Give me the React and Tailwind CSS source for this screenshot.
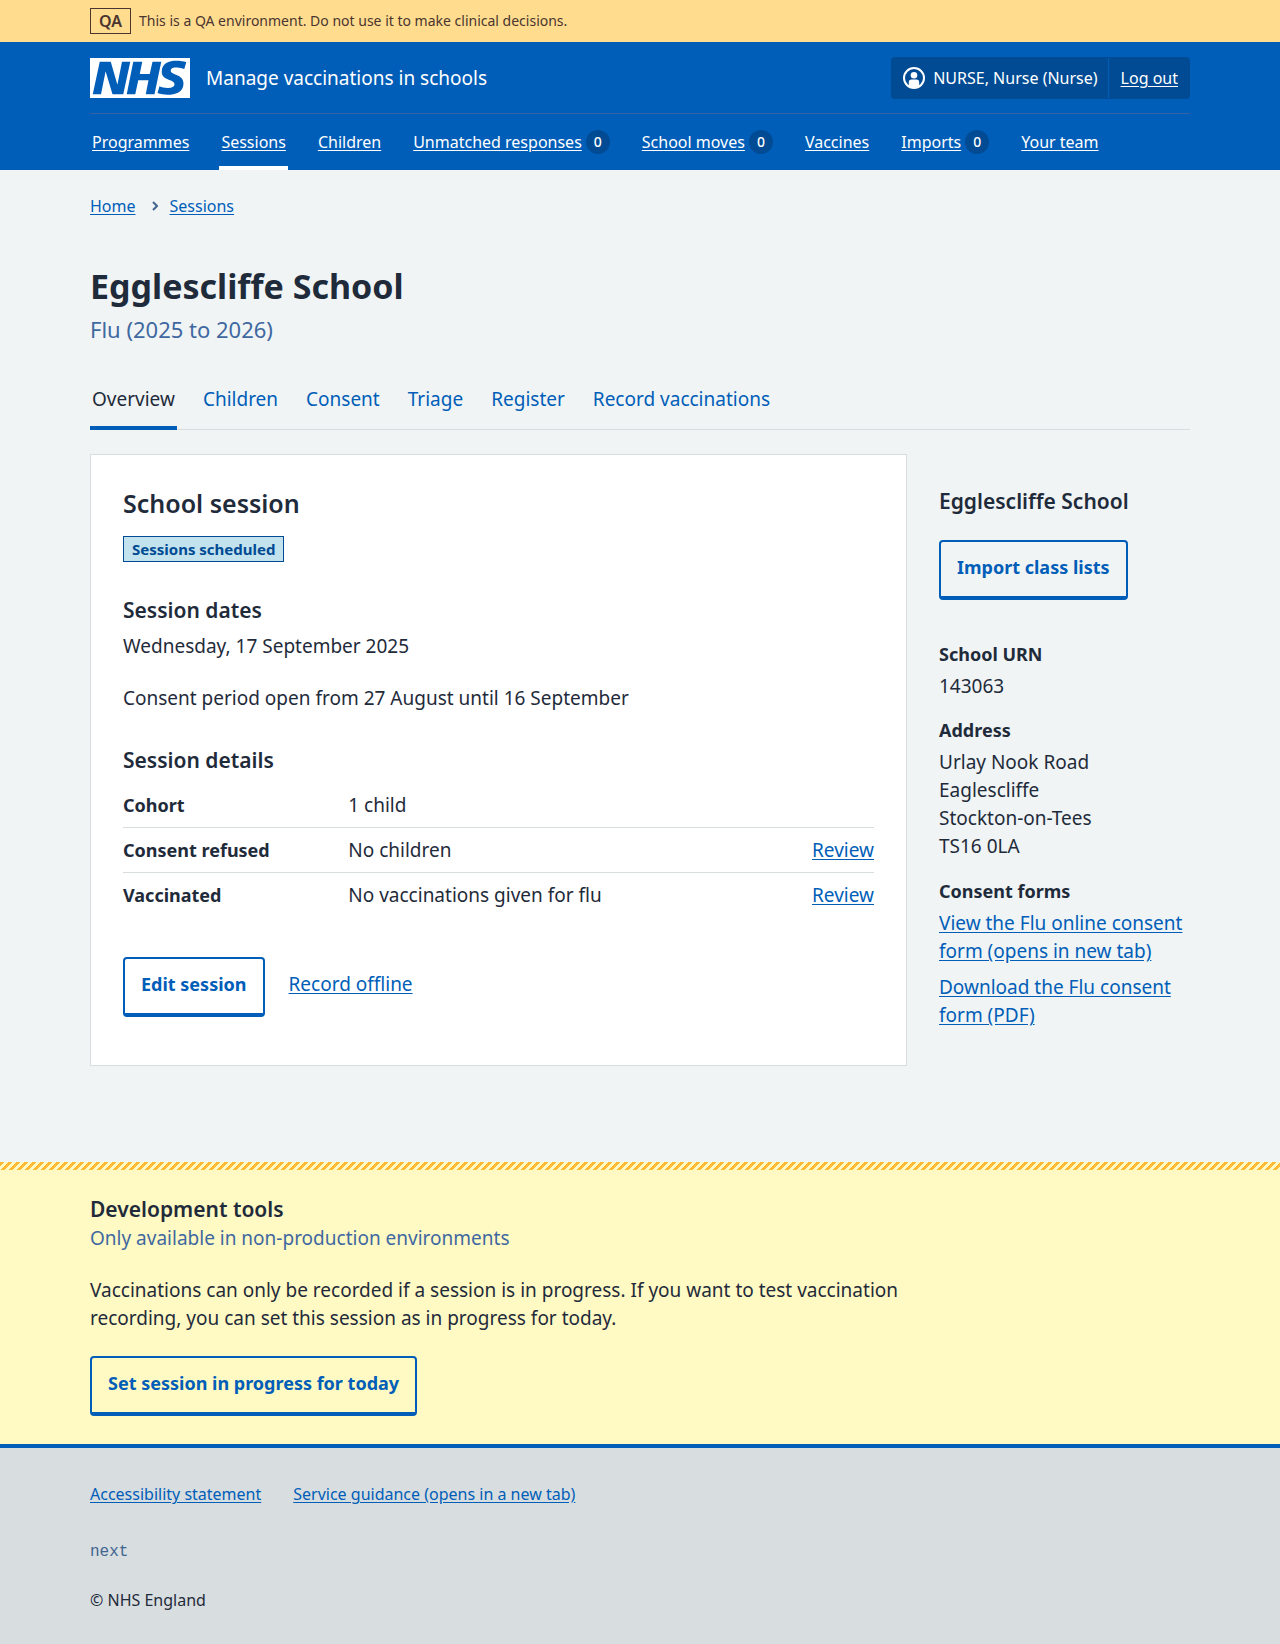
import React from "react";

const navItems = [
  { label: "Programmes" },
  { label: "Sessions", current: true },
  { label: "Children" },
  { label: "Unmatched responses", count: 0 },
  { label: "School moves", count: 0 },
  { label: "Vaccines" },
  { label: "Imports", count: 0 },
  { label: "Your team" },
];

const tabs = ["Overview", "Children", "Consent", "Triage", "Register", "Record vaccinations"];

const details = [
  { key: "Cohort", value: "1 child" },
  { key: "Consent refused", value: "No children", action: true },
  { key: "Vaccinated", value: "No vaccinations given for flu", action: true },
];

function Container({ className = "", children }) {
  return (
    <div className="px-8">
      <div className={"mx-auto max-w-[1100px] " + className}>{children}</div>
    </div>
  );
}

function Link({ children, className = "" }) {
  return (
    <a href="#" className={"text-[#005eb8] underline underline-offset-2 " + className}>
      {children}
    </a>
  );
}

function SecondaryButton({ children }) {
  return (
    <button
      type="button"
      className="rounded border-2 border-b-4 border-[#005eb8] px-4 pt-[11px] pb-[15px] text-[18px] leading-7 font-bold text-[#005eb8]"
    >
      {children}
    </button>
  );
}

function NhsLogo() {
  return (
    <svg viewBox="0 0 200 80" className="h-10 w-[100px] shrink-0" role="img" aria-label="NHS">
      <path
        fill="#fff"
        d="M200 0v80H0V0h200Zm-27.5 5.5c-14.5 0-29 5-29 22 0 10.2 7.7 13.5 14.7 16.3l.7.3c5.4 2 10.1 3.9 10.1 8.4 0 6.5-8.5 7.5-14 7.5s-12.5-1.5-16-3.5L135 70c5.5 2 13.5 3.5 20 3.5 15.5 0 32-4.5 32-22.5 0-19.5-25.5-16.5-25.5-25.5 0-5.5 5.5-6.5 12.5-6.5a35 35 0 0 1 14.5 3l4-13.5c-4.5-2-12-3-20-3Zm-131 2h-22l-14 65H22l9-45h.5l13.5 45h21.5l14-65H64l-9 45h-.5l-13-45Zm63 0h-18l-13 65h17l6-28H117l-5.5 28H129l13.5-65H125L119.5 32h-20l5-24.5Z"
      />
    </svg>
  );
}

function UserIcon() {
  return (
    <svg viewBox="0 0 22 22" className="size-[22px] shrink-0" aria-hidden="true">
      <circle cx="11" cy="11" r="10" fill="none" stroke="#fff" strokeWidth="2" />
      <circle cx="11" cy="8.3" r="3.3" fill="#fff" />
      <path
        fill="#fff"
        d="M8.6 12.6h4.8a2.8 2.8 0 0 1 2.8 2.8v3.6A10 10 0 0 1 11 21a10 10 0 0 1-5.2-2v-3.6a2.8 2.8 0 0 1 2.8-2.8Z"
      />
    </svg>
  );
}

function Header() {
  return (
    <header className="bg-[#005eb8] text-[16px] leading-6 text-white">
      <Container>
        <div className="flex items-center justify-between border-b border-[#3365a8] pt-[15px] pb-3.5">
          <a href="#" className="flex items-center gap-4 text-[19px] leading-7">
            <NhsLogo />
            <span>Manage vaccinations in schools</span>
          </a>
          <div className="flex rounded bg-[#004b93]">
            <span className="my-px flex items-center gap-2 border-r border-[#005eb8] py-2 pr-2.5 pl-3">
              <UserIcon />
              NURSE, Nurse (Nurse)
            </span>
            <a href="#" className="px-3 py-[9px] underline underline-offset-2">
              Log out
            </a>
          </div>
        </div>
        <nav aria-label="Menu">
          <ul className="flex gap-7">
            {navItems.map((item) => (
              <li
                key={item.label}
                className={
                  "flex items-center gap-1 border-b-4 px-0.5 pt-4 pb-3 " +
                  (item.current ? "border-white" : "border-transparent")
                }
              >
                <a href="#" className="underline underline-offset-2">
                  {item.label}
                </a>
                {item.count !== undefined && (
                  <span className="flex size-6 items-center justify-center rounded-full bg-[#004b93] text-[14px] font-medium">
                    {item.count}
                  </span>
                )}
              </li>
            ))}
          </ul>
        </nav>
      </Container>
    </header>
  );
}

function SessionCard() {
  return (
    <section className="min-w-0 flex-1 border border-[#d8dde0] bg-white p-8">
      <h2 className="text-[25px] leading-8 font-semibold">School session</h2>
      <p className="mt-[17px] flex">
        <strong className="border border-[#004b93] bg-[#c2e2ee] px-2 text-[15px] leading-6 font-bold text-[#004b93]">
          Sessions scheduled
        </strong>
      </p>
      <h3 className="mt-[33px] text-[21px] leading-[30px] font-semibold">Session dates</h3>
      <p className="mt-[7px]">Wednesday, 17 September 2025</p>
      <p className="mt-6">Consent period open from 27 August until 16 September</p>
      <h3 className="mt-[33px] text-[21px] leading-[30px] font-semibold">Session details</h3>
      <dl className="mt-2">
        {details.map((row, i) => (
          <div
            key={row.key}
            className={
              "flex py-2 " + (i < details.length - 1 ? "border-b border-[#d8dde0]" : "")
            }
          >
            <dt className="w-[30%] text-[18px] font-bold">{row.key}</dt>
            <dd className="flex-1">{row.value}</dd>
            {row.action && (
              <dd>
                <Link>Review</Link>
              </dd>
            )}
          </div>
        ))}
      </dl>
      <div className="mt-10 mb-4 flex items-start gap-6">
        <SecondaryButton>Edit session</SecondaryButton>
        <Link className="pt-[13px]">Record offline</Link>
      </div>
    </section>
  );
}

function SchoolSidebar() {
  return (
    <aside className="w-[251px] shrink-0 pt-8">
      <h2 className="text-[21px] leading-[30px] font-semibold">Egglescliffe School</h2>
      <div className="mt-6 flex">
        <SecondaryButton>Import class lists</SecondaryButton>
      </div>
      <h3 className="mt-10 text-[18px] font-bold">School URN</h3>
      <p className="mt-1">143063</p>
      <h3 className="mt-4 text-[18px] font-bold">Address</h3>
      <address className="mt-1 not-italic">
        Urlay Nook Road
        <br />
        Eaglescliffe
        <br />
        Stockton-on-Tees
        <br />
        TS16 0LA
      </address>
      <h3 className="mt-[17px] text-[18px] font-bold">Consent forms</h3>
      <ul className="mt-1 flex flex-col gap-2">
        <li>
          <Link>View the Flu online consent form (opens in new tab)</Link>
        </li>
        <li>
          <Link>Download the Flu consent form (PDF)</Link>
        </li>
      </ul>
    </aside>
  );
}

export default function App() {
  return (
    <div className="flex min-h-screen flex-col bg-[#f0f4f5] font-['Noto_Sans','Open_Sans',sans-serif] text-[19px] leading-7 text-[#1f2b3a]">
      <div className="bg-[#ffdc8e] text-[14px] leading-6 text-[#4a3530]">
        <Container className="flex items-center gap-2 py-2">
          <strong className="border border-[#4a3530] px-2 text-[16px] font-semibold">QA</strong>
          <span>This is a QA environment. Do not use it to make clinical decisions.</span>
        </Container>
      </div>
      <Header />
      <main className="pb-24">
        <Container>
          <nav aria-label="Breadcrumb" className="pt-6">
            <ol className="flex items-center text-[16px] leading-6">
              <li>
                <Link>Home</Link>
              </li>
              <li className="flex items-center">
                <svg viewBox="0 0 6 10" className="mr-3 ml-4 h-2.5 w-1.5" aria-hidden="true">
                  <path d="M1 1l4 4-4 4" fill="none" stroke="#41658f" strokeWidth="2" />
                </svg>
                <Link>Sessions</Link>
              </li>
            </ol>
          </nav>
          <h1 className="mt-[46px] text-[34px] leading-[44px] font-bold">Egglescliffe School</h1>
          <p className="mt-[7px] text-[22px] text-[#3f68a0]">Flu (2025 to 2026)</p>
          <nav aria-label="Session" className="mt-[42px] border-b border-[#d8dde0]">
            <ul className="-mb-px flex gap-6">
              {tabs.map((tab, i) => (
                <li
                  key={tab}
                  className={
                    "border-b-4 px-0.5 pb-[13px] " +
                    (i === 0 ? "border-[#005eb8]" : "border-transparent text-[#005eb8]")
                  }
                >
                  <a href="#">{tab}</a>
                </li>
              ))}
            </ul>
          </nav>
          <div className="mt-6 flex items-start gap-8">
            <SessionCard />
            <SchoolSidebar />
          </div>
        </Container>
      </main>
      <section className="bg-[#fff9c4] pb-7">
        <div className="h-2 bg-[linear-gradient(135deg,#ffb933_25%,transparent_25%,transparent_50%,#ffb933_50%,#ffb933_75%,transparent_75%)] bg-size-[8px_8px]" />
        <Container className="pt-6">
          <h2 className="text-[21px] leading-[30px] font-semibold">Development tools</h2>
          <p className="text-[#3f68a0]">Only available in non-production environments</p>
          <p className="mt-6 mb-6 max-w-[817px]">
            Vaccinations can only be recorded if a session is in progress. If you want to test
            vaccination recording, you can set this session as in progress for today.
          </p>
          <SecondaryButton>Set session in progress for today</SecondaryButton>
        </Container>
      </section>
      <footer className="grow border-t-4 border-[#005eb8] bg-[#d8dde0] text-[16px] leading-6">
        <Container className="pt-[34px] pb-8">
          <ul className="flex gap-8">
            <li>
              <Link>Accessibility statement</Link>
            </li>
            <li>
              <Link>Service guidance (opens in a new tab)</Link>
            </li>
          </ul>
          <p className="mt-[34px] font-['Liberation_Mono',monospace] text-[#41658f]">next</p>
          <p className="mt-6">© NHS England</p>
        </Container>
      </footer>
    </div>
  );
}
